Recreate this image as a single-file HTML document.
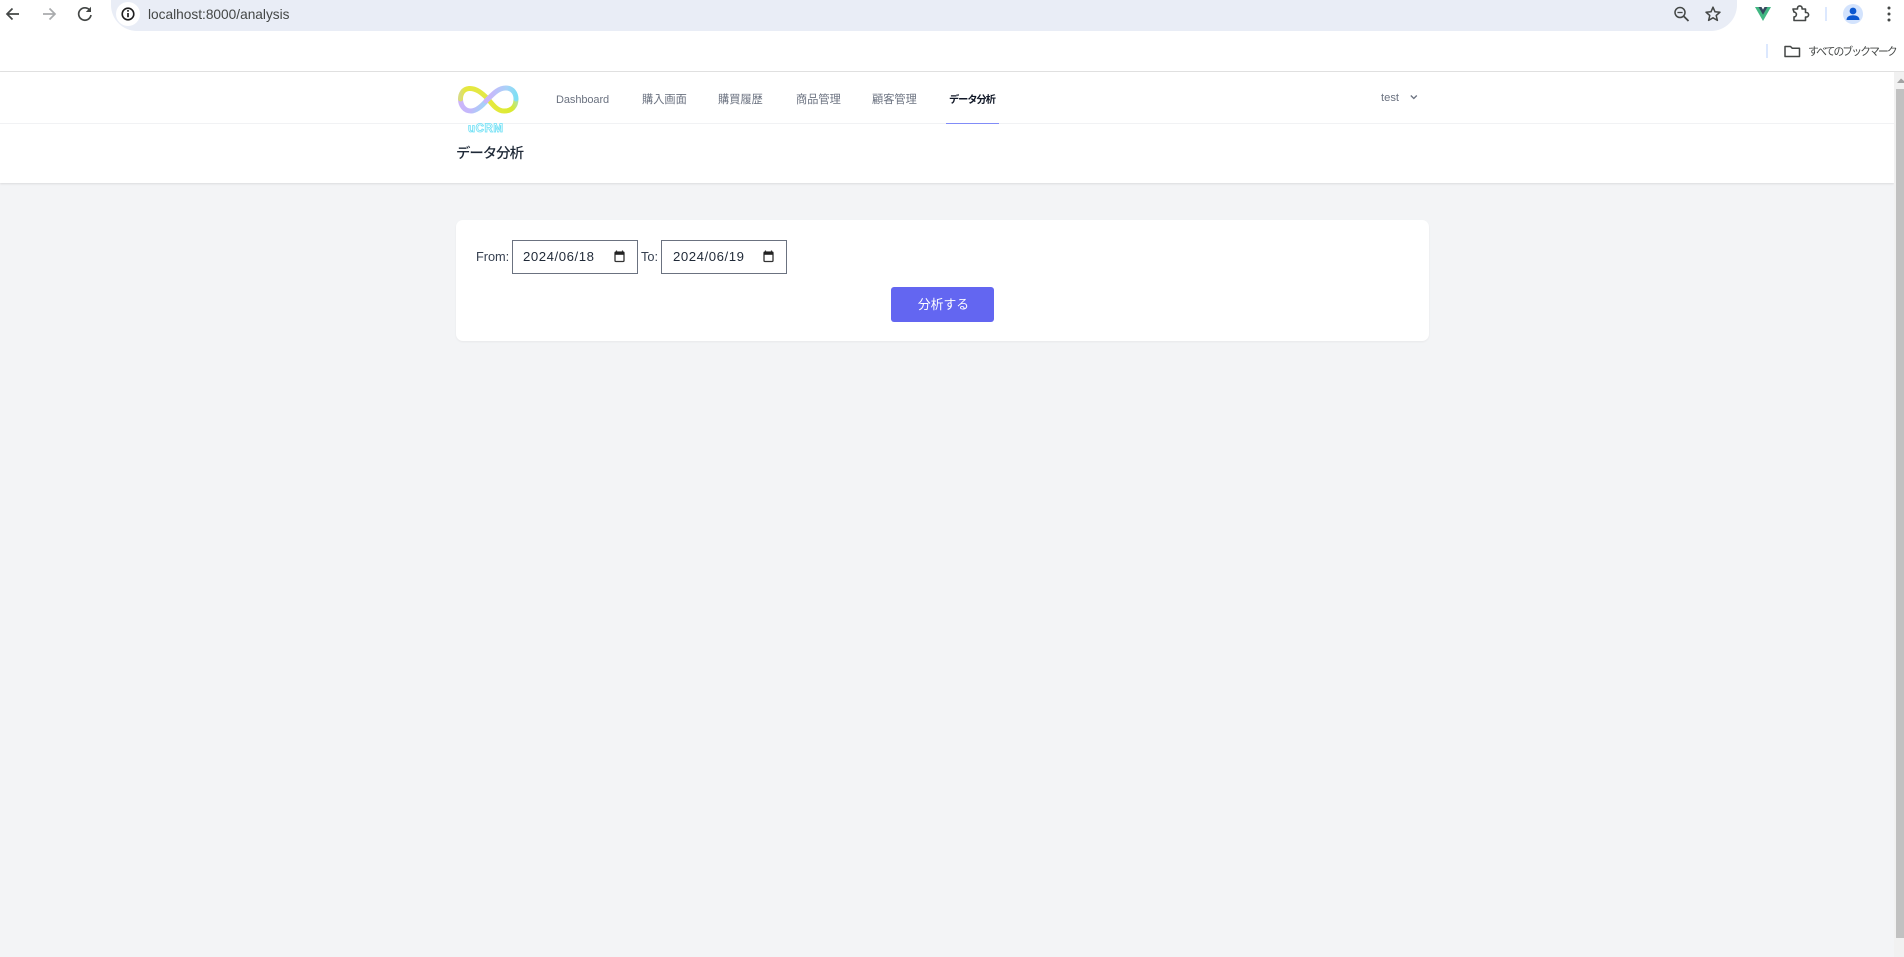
<!DOCTYPE html>
<html lang="ja">
<head>
<meta charset="utf-8">
<title>データ分析</title>
<style>
html,body{margin:0;padding:0;width:1904px;height:957px;overflow:hidden;background:#fff}
body{position:relative;font-family:"Liberation Sans","Noto Sans CJK JP",sans-serif}
.a{position:absolute}
.t{position:absolute;white-space:nowrap;height:20px;line-height:20px}
.nav{font-size:11.2px;color:#6b7280}
svg{position:absolute;overflow:visible}
</style>
</head>
<body>
<!-- browser chrome -->
<div class="a" style="left:111px;top:-20px;width:1626px;height:51px;background:#e9edf6;border-radius:0 0 26px 26px / 0 0 26px 26px"></div>
<div class="a" style="left:116px;top:2px;width:24px;height:24px;border-radius:50%;background:#fff"></div>

<svg style="left:0;top:0" width="110" height="30" fill="none">
  <path d="M19 14H7.5M12.5 8.500L7 14l5.500 5.500" stroke="#444746" stroke-width="1.700"/>
  <path d="M43 14h11.500M49.500 8.500L55 14l-5.500 5.500" stroke="#a9abad" stroke-width="1.700"/>
  <path d="M90 10.500A6.200 6.200 0 1 0 91 15" stroke="#444746" stroke-width="1.700"/>
  <path d="M91 6.800v5.200h-5.200z" fill="#444746"/>
</svg>
<svg style="left:120px;top:6px" width="16" height="16" fill="none">
  <circle cx="8" cy="8" r="5.800" stroke="#1f1f1f" stroke-width="1.600"/>
  <path d="M8 7v4.200" stroke="#1f1f1f" stroke-width="1.700"/>
  <circle cx="8" cy="4.900" r="1" fill="#1f1f1f"/>
</svg>
<div class="t" style="left:148px;top:5px;font-size:13.700px;color:#444746">localhost:8000/analysis</div>

<svg style="left:1670px;top:0" width="234" height="62" fill="none">
  <circle cx="10" cy="12.500" r="5" stroke="#444746" stroke-width="1.500"/>
  <path d="M7.400 12.500h5.200" stroke="#444746" stroke-width="1.300"/>
  <path d="M14 16.500l4.500 4.500" stroke="#444746" stroke-width="1.800"/>
  <path d="M43 7.200l2 4.600 5 .4-3.800 3.300 1.200 4.900-4.400-2.600-4.400 2.600 1.200-4.900-3.800-3.300 5-.4z" stroke="#444746" stroke-width="1.500" stroke-linejoin="round"/>
  <path d="M85 7h5.500l2.500 4.200 2.500-4.200h5.500l-8 14z" fill="#42b883"/>
  <path d="M88.500 7h3l1.500 2.600 1.500-2.600h3l-4.500 7.800z" fill="#35495e"/>
  <path d="M123 9h4.500v-.8a2.300 2.300 0 0 1 4.600 0V9h3.400v3.500h.8a2.300 2.300 0 0 1 0 4.600h-.8v3.400H124v-3.600a2.400 2.400 0 0 0 0-4.800z" stroke="#444746" stroke-width="1.600" stroke-linejoin="round"/>
  <path d="M156 7v14" stroke="#d3e3fd" stroke-width="1.600"/>
  <circle cx="183" cy="14" r="10" fill="#d3e3fd"/>
  <circle cx="183" cy="11" r="3.400" fill="#0b57d0"/>
  <path d="M176.500 20c0-3.500 3-4.800 6.500-4.800s6.500 1.300 6.500 4.800z" fill="#0b57d0"/>
  <circle cx="219" cy="8" r="1.500" fill="#444746"/>
  <circle cx="219" cy="14" r="1.500" fill="#444746"/>
  <circle cx="219" cy="20" r="1.500" fill="#444746"/>
  <path d="M97 44v14" stroke="#d3e3fd" stroke-width="1.600"/>
  <path d="M115 46.500h5.500l1.800 1.800h7.200v8.200h-14.500z" stroke="#444746" stroke-width="1.500" stroke-linejoin="round"/>
</svg>
<div class="t" style="left:1808px;top:42px;color:#444746;letter-spacing:-1.900px;font-size:10.800px">すべてのブックマーク</div>
<div class="a" style="left:0;top:71px;width:1904px;height:1px;background:#e2e2e2"></div>

<!-- page -->
<div class="a" style="left:0;top:72px;width:1894px;height:885px;background:#f3f4f6"></div>
<div class="a" style="left:0;top:72px;width:1894px;height:111px;background:#fff;box-shadow:0 1px 2px rgba(0,0,0,.1)"></div>
<div class="a" style="left:0;top:123px;width:1894px;height:1px;background:#f1f2f4"></div>
<div class="a" style="left:946px;top:123px;width:53px;height:1px;background:#818cf8"></div>

<!-- logo -->
<svg style="left:456px;top:84px" width="66" height="50" fill="none" stroke-linecap="round">
  <defs>
    <linearGradient id="g2" gradientUnits="userSpaceOnUse" x1="34" y1="8" x2="60" y2="12">
      <stop offset="0" stop-color="#c9b6fb"/><stop offset=".6" stop-color="#a9d2f8"/><stop offset="1" stop-color="#7fdff4"/>
    </linearGradient>
    <linearGradient id="g3" gradientUnits="userSpaceOnUse" x1="60" y1="14" x2="36" y2="24">
      <stop offset="0" stop-color="#b0e5a0"/><stop offset=".3" stop-color="#d9ea30"/><stop offset="1" stop-color="#e6e93f"/>
    </linearGradient>
    <linearGradient id="g4" gradientUnits="userSpaceOnUse" x1="4" y1="14" x2="32" y2="14">
      <stop offset="0" stop-color="#d9dc80"/><stop offset=".2" stop-color="#e6e83c"/><stop offset="1" stop-color="#e2e84a"/>
    </linearGradient>
    <linearGradient id="g5" gradientUnits="userSpaceOnUse" x1="4" y1="14" x2="30" y2="26">
      <stop offset="0" stop-color="#cdb4fa"/><stop offset=".5" stop-color="#c4b8fb"/><stop offset="1" stop-color="#9adcf6"/>
    </linearGradient>
  </defs>
  <path d="M4.500 15C4.500 21 8 27 15 27C21 27 27 21 32 15" stroke="url(#g5)" stroke-width="5"/>
  <path d="M32 15C26 9 20 4 13 4.500C7 5 4.500 10 4.500 15" stroke="url(#g4)" stroke-width="5"/>
  <path d="M60 15C60 22 56 27 48 27C41 27 36 20 32 15" stroke="url(#g3)" stroke-width="5"/>
  <path d="M30 17C37 10 42 4 50 4C57 4 60 10 60 15" stroke="url(#g2)" stroke-width="5"/>
  <text x="12" y="48" font-family="'Liberation Sans',sans-serif" font-size="11.500" font-weight="700" fill="#fff" stroke="#6fe0f5" stroke-width=".8" textLength="35">uCRM</text>
</svg>

<!-- nav -->
<div class="t nav" style="left:556px;top:90px;font-size:11px;letter-spacing:-.08px">Dashboard</div>
<div class="t nav" style="left:642px;top:90px">購入画面</div>
<div class="t nav" style="left:718px;top:90px">購買履歴</div>
<div class="t nav" style="left:796px;top:90px">商品管理</div>
<div class="t nav" style="left:872px;top:90px">顧客管理</div>
<div class="t nav" style="left:949px;top:91px;color:#111827;font-size:10.200px;letter-spacing:-1px;font-weight:700">データ分析</div>
<div class="t" style="left:1381px;top:88px;font-size:11.200px;color:#6b7280">test</div>
<svg style="left:1410px;top:93px" width="8" height="8" fill="none"><path d="M.8 2.500L3.800 5.500L6.800 2.500" stroke="#6b7280" stroke-width="1.300"/></svg>

<div class="t" style="left:456px;top:144px;font-size:14.400px;color:#1f2937;letter-spacing:-1px;font-weight:500">データ分析</div>

<!-- card -->
<div class="a" style="left:456px;top:220px;width:973px;height:121px;background:#fff;border-radius:7px;box-shadow:0 1px 2px rgba(0,0,0,.05)"></div>
<div class="t" style="left:476px;top:247px;font-size:12.800px;color:#374151;letter-spacing:-.05px">From:</div>
<div class="a" style="left:512px;top:240px;width:124px;height:32px;border:1px solid #6b7280;background:#fff"></div>
<div class="t" style="left:523px;top:247px;font-size:13.200px;letter-spacing:.55px;color:#1f2937">2024/06/18</div>
<div class="t" style="left:641px;top:247px;font-size:12.800px;color:#374151">To:</div>
<div class="a" style="left:661px;top:240px;width:124px;height:32px;border:1px solid #6b7280;background:#fff"></div>
<div class="t" style="left:673px;top:247px;font-size:13.200px;letter-spacing:.55px;color:#1f2937">2024/06/19</div>
<svg style="left:614px;top:250px" width="11" height="13" fill="none"><path d="M2.500 .5v2M8.500 .5v2" stroke="#222" stroke-width="1.200"/><rect x="1" y="2" width="9" height="9.500" rx="1" stroke="#333" stroke-width="1.300"/><rect x="1" y="2" width="9" height="2.800" fill="#222"/></svg>
<svg style="left:763px;top:250px" width="11" height="13" fill="none"><path d="M2.500 .5v2M8.500 .5v2" stroke="#222" stroke-width="1.200"/><rect x="1" y="2" width="9" height="9.500" rx="1" stroke="#333" stroke-width="1.300"/><rect x="1" y="2" width="9" height="2.800" fill="#222"/></svg>

<div class="a" style="left:891px;top:287px;width:103px;height:35px;background:#6366f1;border-radius:3px"></div>
<div class="t" style="left:892px;top:294.500px;width:103px;text-align:center;font-size:12.800px;color:#fff">分析する</div>

<!-- scrollbar -->
<div class="a" style="left:1894px;top:72px;width:10px;height:885px;background:#f1f1f1"></div>
<div class="a" style="left:1896px;top:89px;width:8px;height:849px;background:#c1c1c1"></div>
<svg style="left:1894px;top:76px" width="10" height="8"><path d="M7 2.500L3 7H10V5z" fill="#a3a3a3"/></svg>
</body>
</html>
